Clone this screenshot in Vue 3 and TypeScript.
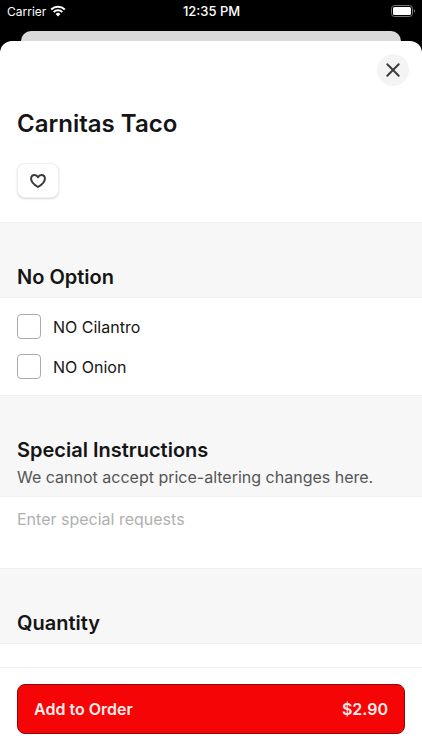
<script setup lang="ts">
import { ref } from 'vue'

interface Option {
  id: string
  label: string
  checked: boolean
}

const options = ref<Option[]>([
  { id: 'no-cilantro', label: 'NO Cilantro', checked: false },
  { id: 'no-onion', label: 'NO Onion', checked: false },
])
const favorite = ref(false)
const requests = ref('')
const price = ref(2.9)
</script>

<template>
  <div class="screen">
    <header class="status">
      <div class="carrier">
        <span>Carrier</span>
        <svg class="wifi" viewBox="0 0 16 12" aria-hidden="true">
          <path d="M1.2 4.5a9.7 9.7 0 0 1 13.6 0" />
          <path d="M3.7 7.1a6.1 6.1 0 0 1 8.6 0" />
          <path class="dot" d="M8 11.4 5.6 8.9a3.4 3.4 0 0 1 4.8 0z" />
        </svg>
      </div>
      <span class="time">12:35 PM</span>
      <div class="power">
        <svg class="battery" viewBox="0 0 25 12" aria-hidden="true">
          <rect class="case" x="0.5" y="0.5" width="21" height="11" rx="3" />
          <rect class="charge" x="2" y="2" width="18" height="8" rx="1.5" />
          <path class="cap" d="M23 4.2c1.6.6 1.6 3 0 3.6z" />
        </svg>
      </div>
    </header>
    <div class="behind"></div>

    <main class="sheet">
      <div class="content">
        <section class="intro">
          <div class="close-row">
            <button class="close" type="button" aria-label="Close">
              <svg viewBox="0 0 16 16" aria-hidden="true"><path d="M2.3 2.3l11.4 11.4M13.7 2.3L2.3 13.7" /></svg>
            </button>
          </div>
          <h1>Carnitas Taco</h1>
          <button class="favorite" type="button" aria-label="Favorite" :aria-pressed="favorite" @click="favorite = !favorite">
            <svg viewBox="0 0 16 14" aria-hidden="true">
              <path d="M8 13C6.6 12.2 1.1 8.8 1.1 4.8 1.1 2.6 2.7 1.1 4.6 1.1 6.1 1.1 7.4 2 8 3.3 8.6 2 9.9 1.1 11.4 1.1 13.3 1.1 14.9 2.6 14.9 4.8 14.9 8.8 9.4 12.2 8 13z" />
            </svg>
          </button>
        </section>

        <div class="band"><h2>No Option</h2></div>
        <section class="options">
          <label v-for="option in options" :key="option.id" class="option" :for="option.id">
            <input :id="option.id" v-model="option.checked" type="checkbox" />
            <span>{{ option.label }}</span>
          </label>
        </section>

        <div class="band">
          <h2><label for="requests">Special Instructions</label></h2>
          <p>We cannot accept price-altering changes here.</p>
        </div>
        <textarea id="requests" v-model="requests" class="requests" placeholder="Enter special requests"></textarea>

        <div class="band"><h2>Quantity</h2></div>
      </div>

      <footer class="footer">
        <button class="add" type="button">
          <span>Add to Order</span>
          <span>${{ price.toFixed(2) }}</span>
        </button>
      </footer>
    </main>
  </div>
</template>

<style>
body {
  background: #000;
}
</style>

<style scoped>
.screen {
  display: flex;
  flex-direction: column;
  height: 100vh;
  overflow: hidden;
  background: #000;
  color: #151515;
  font-family: Inter, "Liberation Sans", sans-serif;
}

.screen * {
  box-sizing: border-box;
}

button,
input,
textarea {
  margin: 0;
  font: inherit;
}

h1,
h2,
p {
  margin: 0;
}

.status {
  display: grid;
  grid-template-columns: 1fr auto 1fr;
  align-items: center;
  flex: none;
  height: 22px;
  margin-bottom: 9px;
  padding: 0 6px 0 7px;
  color: #fff;
  font-size: 12px;
}

.carrier {
  display: flex;
  align-items: center;
  gap: 4px;
}

.wifi {
  width: 16px;
  height: 12px;
  fill: none;
  stroke: #fff;
  stroke-width: 2;
}

.wifi .dot {
  fill: #fff;
  stroke: none;
}

.time {
  font-size: 13px;
  font-weight: 500;
}

.power {
  display: flex;
  justify-content: flex-end;
}

.battery {
  width: 25px;
  height: 12px;
}

.case {
  fill: none;
  stroke: #777;
}

.charge {
  fill: #fff;
}

.cap {
  fill: #777;
}

.behind {
  flex: none;
  height: 10px;
  margin: 0 21px;
  border-radius: 10px 10px 0 0;
  background: #dadada;
}

.sheet {
  display: flex;
  flex: 1;
  flex-direction: column;
  min-height: 0;
  overflow: hidden;
  border-radius: 12px 12px 0 0;
  background: #fff;
}

.content {
  flex: 1;
  min-height: 0;
  overflow: hidden;
}

.intro {
  padding: 13px 13px 24px 17px;
}

.close-row {
  display: flex;
  justify-content: flex-end;
}

.close {
  display: grid;
  place-items: center;
  width: 32px;
  height: 32px;
  padding: 0;
  border: 0;
  border-radius: 50%;
  background: #f4f4f4;
}

.close svg {
  width: 16px;
  height: 16px;
  fill: none;
  stroke: #3c3c3c;
  stroke-width: 2;
  stroke-linecap: round;
}

h1 {
  margin: 22px 0 23px;
  font-size: 24px;
  font-weight: 600;
  line-height: 32px;
}

.favorite {
  display: grid;
  place-items: center;
  width: 42px;
  height: 35px;
  padding: 0;
  border: 1px solid #f0f0f0;
  border-radius: 8px;
  background: #fff;
  box-shadow: 0 1px 2px rgba(0, 0, 0, 0.16);
}

.favorite svg {
  width: 16px;
  height: 14px;
  fill: none;
  stroke: #3c3c3c;
  stroke-width: 2;
  stroke-linejoin: round;
}

.band {
  padding: 40px 17px 6px;
  border: solid #f0f0f0;
  border-width: 1px 0;
  background: #f7f7f7;
}

h2 {
  font-size: 20px;
  font-weight: 600;
  line-height: 28px;
}

.band p {
  color: #555;
  font-size: 16px;
  line-height: 26px;
}

.options {
  display: flex;
  flex-direction: column;
  gap: 16px;
  padding: 16px 17px;
}

.option {
  display: flex;
  align-items: center;
  gap: 12px;
  font-size: 16px;
  line-height: 24px;
}

.option input {
  appearance: none;
  width: 24px;
  height: 25px;
  border: 1px solid #aaa;
  border-radius: 4px;
  background: #fff;
}

.options .option {
  height: 25px;
}

.options {
  gap: 15px;
}

.option input:checked {
  background: #f50505;
}

.requests {
  display: block;
  width: 100%;
  height: 71px;
  padding: 10px 17px;
  border: 0;
  outline: 0;
  background: #fff;
  color: #151515;
  font-size: 16px;
  line-height: 24px;
  resize: none;
}

.requests::placeholder {
  color: #b0b0b0;
  opacity: 1;
}

.footer {
  flex: none;
  padding: 16px 17px;
  border-top: 1px solid #eee;
  background: #fff;
}

.add {
  display: flex;
  align-items: center;
  justify-content: space-between;
  width: 100%;
  height: 50px;
  padding: 0 16px;
  border: 1px solid #8c0808;
  border-radius: 8px;
  background: #f50505;
  color: #ffecec;
  font-size: 16px;
  font-weight: 600;
}
</style>
